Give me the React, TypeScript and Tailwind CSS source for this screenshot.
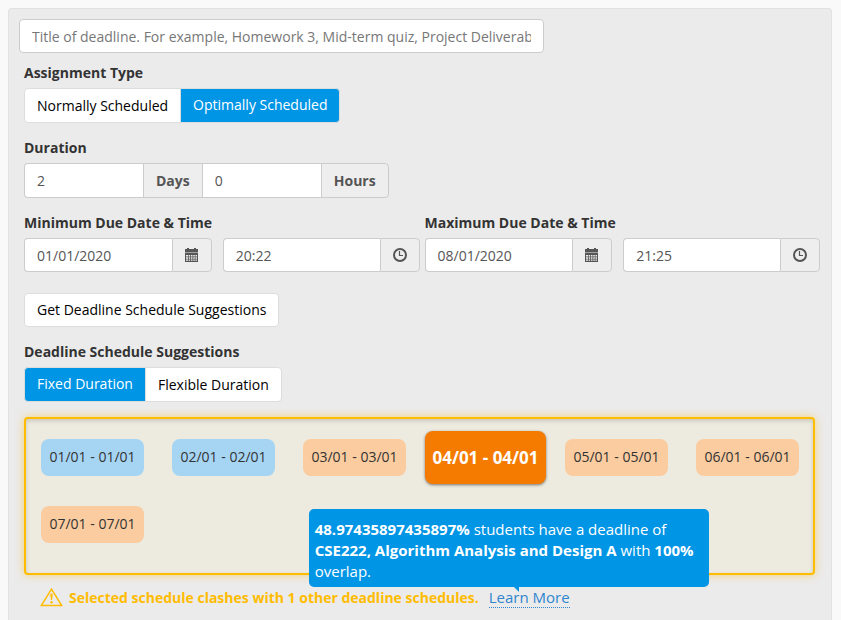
import { useState } from "react";
import type { ReactNode } from "react";

const schedules = [
  { range: "01/01 - 01/01", clash: false },
  { range: "02/01 - 02/01", clash: false },
  { range: "03/01 - 03/01", clash: true },
  { range: "04/01 - 04/01", clash: true },
  { range: "05/01 - 05/01", clash: true },
  { range: "06/01 - 06/01", clash: true },
  { range: "07/01 - 07/01", clash: true },
];

function CalendarIcon() {
  return (
    <svg className="h-[14px] w-[14px]" viewBox="0 0 14 14" fill="#555" aria-hidden="true">
      <path d="M0 1h2V0h2v1h5V0h2v1h2v3H0z" />
      <path d="M0 4h13v1H0z" fillOpacity="0.5" />
      <path fillRule="evenodd" d="M0 5h13v9H0zM1 7h2v1.500H1zM3.700 7h1.500v1.500H3.700zM6 7h1.500v1.500H6zM8.300 7h1.500v1.500H8.300zM10.500 7H12v1.500h-1.500zM1 9.300h2v1.500H1zM3.700 9.300h1.500v1.500H3.700zM6 9.300h1.500v1.500H6zM8.300 9.300h1.500v1.500H8.300zM10.500 9.300H12v1.500h-1.500zM1 11.600h2v1.200H1zM3.700 11.600h1.500v1.200H3.700zM6 11.600h1.500v1.200H6zM8.300 11.600h1.500v1.200H8.300zM10.500 11.600H12v1.200h-1.500z" />
    </svg>
  );
}

function ClockIcon() {
  return (
    <svg className="h-[14px] w-[14px]" viewBox="0 0 14 14" fill="none" stroke="#555" aria-hidden="true">
      <circle cx="7" cy="7" r="6" strokeWidth="2" />
      <path d="M6.500 3v4.500H10" strokeWidth="1.200" />
    </svg>
  );
}

function WarningIcon() {
  return (
    <svg className="h-5 w-[23px] shrink-0" viewBox="0 0 23 20" fill="none" stroke="#ffbc00" aria-hidden="true">
      <path d="M11.500 1.200 21.700 17.500H1.300z" strokeWidth="1.500" />
      <path d="M10.200 5.800h2.600l-.7 6.200h-1.200z" fill="#ffbc00" stroke="none" />
      <circle cx="11.500" cy="14.300" r="1.200" fill="#ffbc00" stroke="none" />
    </svg>
  );
}

function Addon({ children, last = true }: { children: ReactNode; last?: boolean }) {
  return (
    <span
      className={`flex shrink-0 items-center border-y border-l border-[#ccc] bg-[#eee] px-3 font-bold text-[#555] ${
        last ? "rounded-r border-r" : ""
      }`}
    >
      {children}
    </span>
  );
}

function PickerField({ label, value, icon }: { label: string; value: string; icon: ReactNode }) {
  return (
    <div className="flex h-[34px] min-w-0">
      <input
        aria-label={label}
        defaultValue={value}
        className="min-w-0 flex-1 rounded-l border-y border-l border-[#ccc] bg-white px-3 pt-[2px] text-[#555] outline-none"
      />
      <Addon>{icon}</Addon>
    </div>
  );
}

function Toggle({ label, options, initial }: { label: string; options: string[]; initial: number }) {
  const [active, setActive] = useState(initial);
  return (
    <div role="group" aria-label={label} className="flex">
      {options.map((option, i) => (
        <button
          key={option}
          type="button"
          aria-pressed={i === active}
          onClick={() => setActive(i)}
          className={`-ml-px h-[35px] border border-[#ddd] px-3 first:ml-0 first:rounded-l last:rounded-r ${
            i === active ? "bg-[#0095e5] pb-[2px] text-white" : "bg-white pt-px text-black"
          }`}
        >
          {option}
        </button>
      ))}
    </div>
  );
}

const heading = "mb-[5px] block font-bold leading-5 text-[#333]";

export default function App() {
  const [selected, setSelected] = useState(3);

  return (
    <div className="flex min-h-screen flex-col bg-[#f9f9f9] pt-2 pr-[9px] pl-2 font-['Open_Sans','Noto_Sans',sans-serif] text-sm leading-5 text-[#333]">
      <form className="flex-1 rounded-t border border-b-0 border-[#e1e1e1] bg-[#ebebeb] p-[10px] pb-0">
        <input
          aria-label="Title of deadline"
          placeholder="Title of deadline. For example, Homework 3, Mid-term quiz, Project Deliverable 1"
          className="block h-[34px] w-full max-w-[525px] rounded border border-[#ccc] bg-white px-3 outline-none placeholder:text-[#777]"
        />

        <div className="mt-[10px] pl-[5px]">
          <div className="mb-[15px]">
            <span className={heading}>Assignment Type</span>
            <Toggle label="Assignment Type" options={["Normally Scheduled", "Optimally Scheduled"]} initial={1} />
          </div>

          <div className="mb-[15px]">
            <label htmlFor="days" className={heading}>Duration</label>
            <div className="flex h-[35px]">
              <input
                id="days"
                defaultValue="2"
                className="w-[119px] rounded-l border-y border-l border-[#ccc] bg-white px-3 text-[#555] outline-none"
              />
              <Addon last={false}>Days</Addon>
              <input
                aria-label="Hours"
                defaultValue="0"
                className="w-[119px] border-y border-l border-[#ccc] bg-white px-3 text-[#555] outline-none"
              />
              <Addon>Hours</Addon>
            </div>
          </div>

          <div className="mb-[21px] grid grid-cols-2 gap-[5px] pr-px">
            <fieldset className="min-w-0">
              <legend className={heading}>Minimum Due Date &amp; Time</legend>
              <div className="grid grid-cols-[188fr_197fr] gap-[11px]">
                <PickerField label="Minimum due date" value="01/01/2020" icon={<CalendarIcon />} />
                <PickerField label="Minimum due time" value="20:22" icon={<ClockIcon />} />
              </div>
            </fieldset>
            <fieldset className="min-w-0">
              <legend className={heading}>Maximum Due Date &amp; Time</legend>
              <div className="grid grid-cols-[188fr_197fr] gap-[11px]">
                <PickerField label="Maximum due date" value="08/01/2020" icon={<CalendarIcon />} />
                <PickerField label="Maximum due time" value="21:25" icon={<ClockIcon />} />
              </div>
            </fieldset>
          </div>

          <button type="button" className="mb-[15px] block h-[34px] rounded border border-[#ddd] bg-white px-3 text-black">
            Get Deadline Schedule Suggestions
          </button>

          <span className={heading}>Deadline Schedule Suggestions</span>
          <Toggle label="Deadline Schedule Suggestions" options={["Fixed Duration", "Flexible Duration"]} initial={0} />

          <div className="mt-[15px] mr-[6px] grid grid-cols-6 gap-y-[30px] rounded border-2 border-[#ffbc00] bg-[#edebdf] pt-5 pb-[30px] pl-px shadow-[0_0_8px_rgba(255,188,0,0.5),inset_0_2px_4px_rgba(0,0,0,0.15)]">
            {schedules.map(({ range, clash }, i) => (
              <div key={range} className="flex h-[37px] items-center justify-center">
                <button
                  type="button"
                  aria-pressed={i === selected}
                  onClick={() => setSelected(i)}
                  className={`shrink-0 whitespace-nowrap ${
                    i === selected
                      ? "h-[53px] rounded-lg bg-[#f47b00] px-[7px] text-[17px] font-bold text-white shadow-[0_1px_3px_rgba(0,0,0,0.5)]"
                      : clash
                        ? "h-[37px] rounded-lg bg-[#facca0] px-2 pb-[2px] text-[#333]"
                        : "h-[37px] rounded-lg bg-[#a6d5f3] px-2 pb-[2px] text-[#333]"
                  }`}
                >
                  {range}
                </button>
              </div>
            ))}
          </div>

          <div className="mt-[13px] flex items-center pl-4 leading-5">
            <WarningIcon />
            <strong className="ml-[6px] font-bold text-[#ffbc00]">
              Selected schedule clashes with 1 other deadline schedules.
            </strong>
            <span className="relative ml-[10px]">
              <a
                href="#clashes"
                aria-describedby="clash-detail"
                className="block h-[19px] border-b border-dotted border-[#2f86cf] text-[15px] leading-4 text-[#2f86cf]"
              >
                Learn More
              </a>
              <span
                id="clash-detail"
                role="tooltip"
                className="absolute bottom-full -left-[180px] mb-[2px] w-[400px] rounded-[5px] bg-[#0095e5] px-[6px] pt-[10px] pb-[5px] text-[15px] leading-[21px] text-white"
              >
                <b>48.97435897435897%</b> students have a deadline of <b>CSE222, Algorithm Analysis and Design A</b> with{" "}
                <b>100%</b> overlap.
                <svg className="absolute top-full left-[205px] h-[5px] w-[5px]" viewBox="0 0 5 5" fill="#0095e5" aria-hidden="true">
                  <path d="M0 0h5v5z" />
                </svg>
              </span>
            </span>
          </div>
        </div>
      </form>
    </div>
  );
}
